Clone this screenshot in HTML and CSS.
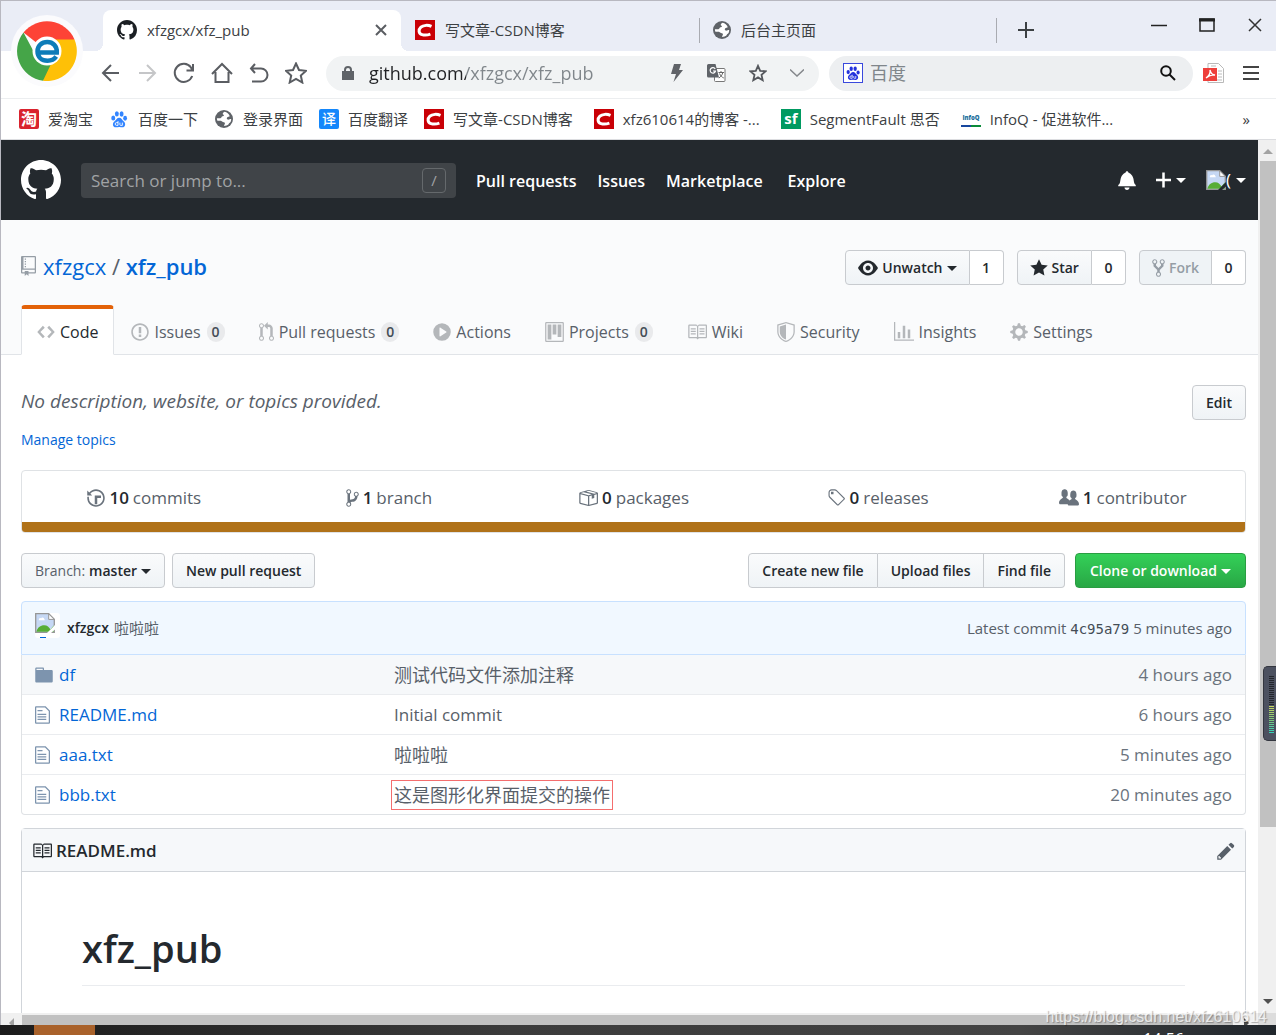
FILE: index.html
```html
<!DOCTYPE html>
<html lang="zh-CN">
<head>
<meta charset="utf-8">
<title>xfzgcx/xfz_pub</title>
<link rel="stylesheet" href="styles.css">
</head>
<body>
<svg class="sprite" aria-hidden="true">
  <symbol id="mark" viewBox="0 0 16 16"><path d="M8 0C3.58 0 0 3.58 0 8c0 3.54 2.29 6.53 5.47 7.59.4.07.55-.17.55-.38 0-.19-.01-.82-.01-1.49-2.01.37-2.53-.49-2.69-.94-.09-.23-.48-.94-.82-1.13-.28-.15-.68-.52-.01-.53.63-.01 1.08.58 1.23.82.72 1.21 1.87.87 2.33.66.07-.52.28-.87.51-1.07-1.78-.2-3.64-.89-3.64-3.95 0-.87.31-1.59.82-2.15-.08-.2-.36-1.02.08-2.12 0 0 .67-.21 2.2.82.64-.18 1.32-.27 2-.27.68 0 1.36.09 2 .27 1.53-1.04 2.2-.82 2.2-.82.44 1.1.16 1.92.08 2.12.51.56.82 1.27.82 2.15 0 3.07-1.87 3.75-3.65 3.95.29.25.54.73.54 1.48 0 1.07-.01 1.93-.01 2.2 0 .21.15.46.55.38A8.013 8.013 0 0016 8c0-4.42-3.58-8-8-8z"/></symbol>
  <symbol id="repo" viewBox="0 0 12 16"><path d="M4 9H3V8h1v1zm0-3H3v1h1V6zm0-2H3v1h1V4zm0-2H3v1h1V2zm8-1v12c0 .55-.45 1-1 1H6v2l-1.5-1.5L3 16v-2H1c-.55 0-1-.45-1-1V1c0-.55.45-1 1-1h10c.55 0 1 .45 1 1zm-1 10H1v2h2v-1h3v1h5v-2zm0-10H2v9h9V1z"/></symbol>
  <symbol id="code" viewBox="0 0 14 16"><path d="M9.5 3L8 4.5 11.5 8 8 11.5 9.5 13 14 8 9.5 3zm-5 0L0 8l4.5 5L6 11.5 2.5 8 6 4.5 4.5 3z"/></symbol>
  <symbol id="issue" viewBox="0 0 14 16"><path d="M7 2.3c3.14 0 5.7 2.56 5.7 5.7s-2.56 5.7-5.7 5.7A5.71 5.71 0 011.3 8c0-3.14 2.56-5.7 5.7-5.7zM7 1C3.14 1 0 4.14 0 8s3.14 7 7 7 7-3.14 7-7-3.14-7-7-7zm1 3H6v5h2V4zm0 6H6v2h2v-2z"/></symbol>
  <symbol id="pull" viewBox="0 0 12 16"><path d="M11 11.28V5c-.03-.78-.34-1.47-.94-2.06C9.46 2.35 8.78 2.03 8 2H7V0L4 3l3 3V4h1c.27.02.48.11.69.31.21.2.3.42.31.69v6.28A1.993 1.993 0 0010 15a1.993 1.993 0 001-3.72zm-1 2.92c-.66 0-1.2-.55-1.2-1.2 0-.65.55-1.2 1.2-1.2.65 0 1.2.55 1.2 1.2 0 .65-.55 1.2-1.2 1.2zM4 3c0-1.11-.89-2-2-2a1.993 1.993 0 00-1 3.72v6.56A1.993 1.993 0 002 15a1.993 1.993 0 001-3.72V4.72c.59-.34 1-.98 1-1.72zm-.8 10c0 .66-.55 1.2-1.2 1.2-.65 0-1.2-.55-1.2-1.2 0-.65.55-1.2 1.2-1.2.65 0 1.2.55 1.2 1.2zM2 4.2C1.34 4.2.8 3.65.8 3c0-.65.55-1.2 1.2-1.2.65 0 1.2.55 1.2 1.2 0 .65-.55 1.2-1.2 1.2z"/></symbol>
  <symbol id="play" viewBox="0 0 14 16"><path fill-rule="evenodd" d="M14 8A7 7 0 110 8a7 7 0 0114 0zm-8.223 3.482l4.599-3.066a.5.5 0 000-.832L5.777 4.518A.5.5 0 005 4.934v6.132a.5.5 0 00.777.416z"/></symbol>
  <symbol id="project" viewBox="0 0 15 16"><path fill-rule="evenodd" d="M10 12h3V2h-3v10zm-4-2h3V2H6v8zm-4 4h3V2H2v12zm-1 1h13V1H1v14zM14 0H1a1 1 0 00-1 1v14a1 1 0 001 1h13a1 1 0 001-1V1a1 1 0 00-1-1z"/></symbol>
  <symbol id="book" viewBox="0 0 16 16"><path fill-rule="evenodd" d="M3 5h4v1H3V5zm0 3h4V7H3v1zm0 2h4V9H3v1zm11-5h-4v1h4V5zm0 2h-4v1h4V7zm0 2h-4v1h4V9zm2-6v9c0 .55-.45 1-1 1H9.5l-1 1-1-1H2c-.55 0-1-.45-1-1V3c0-.55.45-1 1-1h5.5l1 1 1-1H15c.55 0 1 .45 1 1zm-8 .5L7.5 3H2v9h6V3.5zm7-.5H9.5l-.5.5V12h6V3z"/></symbol>
  <symbol id="shield" viewBox="0 0 14 16"><path fill-rule="evenodd" d="M0 2l7-2 7 2v6.02C14 12.69 8.69 16 7 16c-1.69 0-7-3.31-7-7.98V2zm1 .75L7 1l6 1.75v5.268C13 12.104 8.449 15 7 15c-1.449 0-6-2.896-6-6.982V2.75zm1 .75L7 2v12c-1.207 0-5-2.482-5-5.985V3.5z"/></symbol>
  <symbol id="graph" viewBox="0 0 16 16"><path d="M16 14v1H0V0h1v14h15zM5 13H3V8h2v5zm4 0H7V3h2v10zm4 0h-2V6h2v7z"/></symbol>
  <symbol id="gear" viewBox="0 0 14 16"><path fill-rule="evenodd" d="M14 8.77v-1.6l-1.94-.64-.45-1.09.88-1.84-1.13-1.13-1.81.91-1.09-.45-.69-1.92h-1.6l-.63 1.94-1.11.45-1.84-.88-1.13 1.13.91 1.81-.45 1.09L0 7.23v1.59l1.94.64.45 1.09-.88 1.84 1.13 1.13 1.81-.91 1.09.45.69 1.92h1.59l.63-1.94 1.11-.45 1.84.88 1.13-1.13-.92-1.81.47-1.09L14 8.75v.02zM7 11c-1.66 0-3-1.34-3-3s1.34-3 3-3 3 1.34 3 3-1.34 3-3 3z"/></symbol>
  <symbol id="eye" viewBox="0 0 16 16"><path fill-rule="evenodd" d="M8.06 2C3 2 0 8 0 8s3 6 8.06 6C13 14 16 8 16 8s-3-6-7.94-6zM8 12c-2.2 0-4-1.78-4-4 0-2.2 1.8-4 4-4 2.22 0 4 1.8 4 4 0 2.22-1.78 4-4 4zm2-4c0 1.11-.89 2-2 2-1.11 0-2-.89-2-2 0-1.11.89-2 2-2 1.11 0 2 .89 2 2z"/></symbol>
  <symbol id="star" viewBox="0 0 14 16"><path d="M14 6l-4.9-.64L7 1 4.9 5.36 0 6l3.6 3.26L2.67 14 7 11.67 11.33 14l-.93-4.74L14 6z"/></symbol>
  <symbol id="fork" viewBox="0 0 10 16"><path fill-rule="evenodd" d="M8 1a1.993 1.993 0 00-1 3.72V6L5 8 3 6V4.72A1.993 1.993 0 002 1a1.993 1.993 0 00-1 3.72V6.5l3 3v1.78A1.993 1.993 0 005 15a1.993 1.993 0 001-3.72V9.5l3-3V4.72A1.993 1.993 0 008 1zM2 4.2C1.34 4.2.8 3.65.8 3c0-.65.55-1.2 1.2-1.2.65 0 1.2.55 1.2 1.2 0 .65-.55 1.2-1.2 1.2zm3 10c-.66 0-1.2-.55-1.2-1.2 0-.65.55-1.2 1.2-1.2.65 0 1.2.55 1.2 1.2 0 .65-.55 1.2-1.2 1.2zm3-10c-.66 0-1.2-.55-1.2-1.2 0-.65.55-1.2 1.2-1.2.65 0 1.2.55 1.2 1.2 0 .65-.55 1.2-1.2 1.2z"/></symbol>
  <symbol id="history" viewBox="0 0 14 16"><path d="M8 13H6V6h5v2H8v5zM7 1C4.81 1 2.87 2.02 1.59 3.59L0 2v4h4L2.5 4.5C3.55 3.17 5.17 2.3 7 2.3c3.14 0 5.7 2.56 5.7 5.7s-2.56 5.7-5.7 5.7A5.71 5.71 0 011.3 8c0-.34.03-.67.09-1H.08C.03 7.33 0 7.66 0 8c0 3.86 3.14 7 7 7s7-3.14 7-7-3.14-7-7-7z"/></symbol>
  <symbol id="branch" viewBox="0 0 10 16"><path fill-rule="evenodd" d="M10 5c0-1.11-.89-2-2-2a1.993 1.993 0 00-1 3.72v.3c-.02.52-.23.98-.63 1.38-.4.4-.86.61-1.38.63-.83.02-1.48.16-2 .45V4.72a1.993 1.993 0 00-1-3.72C.88 1 0 1.89 0 3a2 2 0 001 1.72v6.56c-.59.35-1 .99-1 1.72 0 1.11.89 2 2 2 1.11 0 2-.89 2-2 0-.53-.2-1-.53-1.36.09-.06.48-.41.59-.47.25-.11.56-.17.94-.17 1.05-.05 1.95-.45 2.75-1.25S8.95 7.77 9 6.73h-.02C9.59 6.37 10 5.73 10 5zM2 1.8c.66 0 1.2.55 1.2 1.2 0 .65-.55 1.2-1.2 1.2C1.35 4.2.8 3.65.8 3c0-.65.55-1.2 1.2-1.2zm0 12.41c-.66 0-1.2-.55-1.2-1.2 0-.65.55-1.2 1.2-1.2.65 0 1.2.55 1.2 1.2 0 .65-.55 1.2-1.2 1.2zm6-8c-.66 0-1.2-.55-1.2-1.2 0-.65.55-1.2 1.2-1.2.65 0 1.2.55 1.2 1.2 0 .65-.55 1.2-1.2 1.2z"/></symbol>
  <symbol id="package" viewBox="0 0 16 16"><path fill-rule="evenodd" d="M1 4.27v7.47c0 .45.3.84.75.97l6.5 1.73c.16.05.34.05.5 0l6.5-1.73c.45-.13.75-.52.75-.97V4.27c0-.45-.3-.84-.75-.97l-6.5-1.74a1.4 1.4 0 00-.5 0L1.75 3.3c-.45.13-.75.52-.75.97zm7 9.09l-6-1.59V5l6 1.61v6.75zM2 4l2.5-.67L11 5.06l-2.5.67L2 4zm13 7.77l-6 1.59V6.61l2-.55V8.5l2-.53V5.53L15 5v6.77zm-2-7.24L6.5 2.8l2-.53L15 4l-2 .53z"/></symbol>
  <symbol id="tag" viewBox="0 0 14 16"><path fill-rule="evenodd" d="M7.73 1.73C7.26 1.26 6.62 1 5.96 1H3.5C2.13 1 1 2.13 1 3.5v2.47c0 .66.27 1.3.73 1.77l6.06 6.06c.39.39 1.02.39 1.41 0l4.59-4.59a.996.996 0 000-1.41L7.73 1.73zM2.38 7.09c-.31-.3-.47-.7-.47-1.13V3.5c0-.88.72-1.59 1.59-1.59h2.47c.42 0 .83.16 1.13.47l6.14 6.13-4.73 4.73-6.13-6.15zM3.01 3h2v2H3V3h.01z"/></symbol>
  <symbol id="people" viewBox="0 0 16 16"><path d="M16 12.999c0 .439-.45 1-1 1H7.995c-.539 0-.994-.447-.995-.999H1c-.54 0-1-.561-1-1 0-2.634 3-4 3-4s.229-.409 0-1c-.841-.621-1.058-.59-1-3 .058-2.419 1.367-3 2.5-3s2.442.58 2.5 3c.058 2.41-.159 2.379-1 3-.229.59 0 1 0 1s1.549.711 2.42 2.088C9.196 9.369 10 8.999 10 8.999s.229-.409 0-1c-.841-.62-1.058-.59-1-3 .058-2.419 1.367-3 2.5-3s2.437.581 2.495 3c.059 2.41-.158 2.38-1 3-.229.59 0 1 0 1s3.005 1.366 3.005 4z"/></symbol>
  <symbol id="file" viewBox="0 0 12 16"><path fill-rule="evenodd" d="M6 5H2V4h4v1zM2 8h7V7H2v1zm0 2h7V9H2v1zm0 2h7v-1H2v1zm10-7.5V14c0 .55-.45 1-1 1H1c-.55 0-1-.45-1-1V2c0-.55.45-1 1-1h7.5L12 4.5zM11 5L8 2H1v12h10V5z"/></symbol>
  <symbol id="folder" viewBox="0 0 14 16"><path fill-rule="evenodd" d="M13 4H7V3c0-.66-.31-1-1-1H1c-.55 0-1 .45-1 1v10c0 .55.45 1 1 1h12c.55 0 1-.45 1-1V5c0-.55-.45-1-1-1zM6 4H1V3h5v1z"/></symbol>
  <symbol id="pencil" viewBox="0 0 14 16"><path fill-rule="evenodd" d="M0 12v3h3l8-8-3-3-8 8zm3 2H1v-2h1v1h1v1zm10.3-9.3L12 6 9 3l1.3-1.3a.996.996 0 011.41 0l1.59 1.59c.39.39.39 1.02 0 1.41z"/></symbol>
  <symbol id="bell" viewBox="0 0 14 16"><path d="M14 12v1H0v-1l.73-.58c.77-.77.81-2.55 1.19-4.42C2.69 3.23 6 2 6 2c0-.55.45-1 1-1s1 .45 1 1c0 0 3.39 1.23 4.16 5 .38 1.88.42 3.66 1.19 4.42l.66.58H14zm-7 4c1.11 0 2-.89 2-2H5c0 1.11.89 2 2 2z"/></symbol>
  <symbol id="plus" viewBox="0 0 12 16"><path d="M12 9H7v5H5V9H0V7h5V2h2v5h5v2z"/></symbol>
  <symbol id="csdn" viewBox="0 0 20 20"><path fill="#c90006" d="M0 0h20v20H0z"/><path fill="none" stroke="#fff" stroke-width="3" d="M16.500 6.300C13 4.900 8.300 5 5.900 7.200 3.100 9.800 3.600 13.600 7 14.600c2.700.8 5.600.5 8.400-.5"/></symbol>
  <symbol id="globe" viewBox="0 0 18 18"><circle cx="9" cy="9" r="9" fill="#5f6368"/><path fill="#fff" d="M9.500 1.800c-1.800 1-2.300 2.300-1 3 .9.500.3 1.500-.8 1.500-1.400 0-1 1.800-2.300 2H1.900c0 .9.100 1.700.5 2.500 2 .2 3.300-.3 4.700.6 1.100.8 2.600.5 2.800 1.700.2 1.100-.8 1.700-.8 2.900 1.700 0 3.300-.6 4.500-1.700.3-1.300 1.300-1.600 2-2.300.4-.9.600-1.900.6-2.900-1.400-.2-2 .9-3.300.5-1.200-.3-1.400-1.400-.6-2.300.7-.8 1.700-.4 2.500-1.100A7.300 7.300 0 009.500 1.800z"/></symbol>
  <symbol id="paw" viewBox="0 0 20 20"><ellipse cx="3.600" cy="8.800" rx="2.200" ry="2.800"/><ellipse cx="7.600" cy="4.300" rx="2.200" ry="3"/><ellipse cx="12.900" cy="4.400" rx="2.200" ry="3"/><ellipse cx="16.800" cy="9.200" rx="2.100" ry="2.700"/><path d="M10.200 8.600c2.500 0 3 2.400 5.200 4.200 2.500 2.100 1.700 6.500-1.700 6.500-1.500 0-2.200-.3-3.500-.3s-2.300.3-3.700.3c-3.500 0-4.300-4.200-1.700-6.500 2.300-1.900 2.900-4.200 5.400-4.200z"/><path fill="none" stroke="#fff" d="M8.900 12.300v4.800H7.300a1.500 1.500 0 010-3.100h1.600M11 14v2.200c0 .7.300.9 1 .9h1.700V14"/></symbol>
  <symbol id="broken" viewBox="0 0 20 20"><path fill="#c6d8f4" stroke="#969696" stroke-width="1.300" d="M.7.700h13l5.600 5.600v13H.7z"/><path fill="#fff" d="M4 7.200c-.7-1.600 1-2.800 2-1.800.8-1.800 3.500-1 3.200.9.800 0 .9.900.4.900z"/><path fill="#57ad35" d="M1.400 18.700c1-4 4-6.400 7.800-6.400 3 0 5 2 6.300 4.300l3.200-4v6.100z"/><path fill="#fff" stroke="#969696" d="M13.700.9v5.500h5.500z"/><path fill="currentColor" d="M12 20l8-8v4.500L16 20z"/></symbol>
</svg>

<div class="window">
  <header class="chrome">
    <div class="tabstrip">
      <div class="tab active"><svg width="20" height="20"><use href="#mark"/></svg><span>xfzgcx/xfz_pub</span>
        <button class="bare tab-close" aria-label="关闭标签页"><svg width="12" height="12" viewBox="0 0 12 12" fill="none" stroke="#5a5d62" stroke-width="2"><path d="M1 1l10 10M11 1L1 11"/></svg></button></div>
      <div class="tab"><svg width="20" height="20"><use href="#csdn"/></svg><span>写文章-CSDN博客</span></div>
      <div class="tab ruled"><svg width="18" height="18"><use href="#globe"/></svg><span>后台主页面</span></div>
      <button class="bare new-tab" aria-label="新标签页"><svg width="16" height="16" viewBox="0 0 16 16" stroke="#3c4043" stroke-width="2"><path d="M8 0v16M0 8h16"/></svg></button>
      <div class="controls">
        <button class="bare" aria-label="最小化"><svg width="16" height="16" viewBox="0 0 16 16" stroke="#222" stroke-width="1.500"><path d="M0 8.500h16"/></svg></button>
        <button class="bare" aria-label="最大化"><svg width="16" height="16" viewBox="0 0 16 16" fill="none" stroke="#222"><path stroke-width="1.500" d="M1 2h14v12H1z"/><path stroke-width="3" d="M0 3h16"/></svg></button>
        <button class="bare" aria-label="关闭"><svg width="16" height="16" viewBox="0 0 16 16" stroke="#333" stroke-width="1.500"><path d="M2 2l12 12M14 2L2 14"/></svg></button>
      </div>
    </div>
    <svg class="brand" width="74" height="74" viewBox="0 0 74 74" aria-label="浏览器标志">
      <circle cx="37" cy="37" r="36" fill="#fbfbfd"/>
      <path fill="#fd4336" d="M37 37L13.500 18.500A30 30 0 0164.500 25.500z"/>
      <path fill="#fec007" d="M37 37V25.500h27.500A30 30 0 0133 66.800z"/>
      <path fill="#45a548" d="M37 37l-4 29.800A30 30 0 0113.500 18.500L25 40l16 10-8 16.800z"/>
      <circle cx="37" cy="37" r="14.500" fill="#fff"/>
      <path fill="none" stroke="#0d7cb8" stroke-width="4.500" d="M27 38.500h19.800c.5-6.500-4-10.500-9.500-10.500-5.700 0-9.800 4-9.800 9.300 0 5.500 4 9.400 10 9.400 4 0 6.800-1.400 8.700-4.200"/>
    </svg>
    <div class="toolbar">
      <div class="nav-icons">
        <button class="bare" aria-label="后退"><svg width="20" height="20" viewBox="0 0 20 20"><path d="M18 10H2M10 2l-8 8 8 8"/></svg></button>
        <button class="bare dim" aria-label="前进"><svg width="20" height="20" viewBox="0 0 20 20"><path d="M2 10h16M10 2l8 8-8 8"/></svg></button>
        <button class="bare" aria-label="刷新"><svg width="22" height="22" viewBox="0 0 22 22"><path d="M19.200 14A9 9 0 1118 5.500L19 7.500M20 2v6.500h-6.500"/></svg></button>
        <button class="bare" aria-label="主页"><svg width="22" height="22" viewBox="0 0 22 22"><path d="M1 12L11 2l10 10M4.500 10v10h13V10"/></svg></button>
        <button class="bare" aria-label="撤销"><svg width="20" height="20" viewBox="0 0 20 20"><path d="M6 1L2 5.500 6 10M2 5.500h10a6.500 6.500 0 010 13H3"/></svg></button>
        <button class="bare" aria-label="收藏"><svg width="22" height="22" viewBox="0 0 22 22"><path d="M11 1.500l3 6.500 7 .8-5.200 4.700 1.500 7L11 17l-6.300 3.500 1.500-7L1 8.800 8 8z"/></svg></button>
      </div>
      <div class="pill address">
        <svg width="12" height="14" viewBox="0 0 12 14"><path fill="#5f6368" d="M0 5h12v9H0z"/><path fill="none" stroke="#5f6368" stroke-width="2" d="M3 6V4a3 3 0 016 0v2"/></svg>
        <input class="url" aria-label="地址" value="github.com/xfzgcx/xfz_pub">
        <button class="bare" aria-label="极速模式"><svg width="14" height="18" viewBox="0 0 14 18"><path fill="#606368" d="M4 0h7L9 6h4L3.500 18 6 10H1z"/></svg></button>
        <button class="bare" aria-label="翻译"><svg width="19" height="19" viewBox="0 0 19 19"><rect x="7.500" y="4.500" width="10.500" height="13" rx="1" fill="#fff" stroke="#777"/><path fill="#5f6368" d="M1.500 0h7l3.500 13.500H1.500A1.500 1.500 0 010 12V1.500A1.500 1.500 0 011.500 0z"/><path fill="none" stroke="#fff" stroke-width="1.200" d="M8.200 5A2.700 2.700 0 108.500 7H6"/><path fill="none" stroke="#666" d="M11.500 8.500h5.500M14 7v1.500M15.800 8.500c-.5 2.500-2 4.500-4 5.500M12.500 9.500c1 2.200 2.500 3.800 4.300 4.500"/></svg></button>
        <button class="bare" aria-label="加入收藏"><svg width="18" height="18" viewBox="0 0 18 18" fill="none" stroke="#55585d" stroke-width="1.800"><path d="M9 1.800l2.200 5 5.300.5-4 3.600 1.200 5.300L9 13.400l-4.700 2.800 1.200-5.300-4-3.600 5.300-.5z"/></svg></button>
        <button class="bare" aria-label="展开"><svg width="14" height="8" viewBox="0 0 14 8" fill="none" stroke="#85888c" stroke-width="1.500"><path d="M0 .5l7 6.500 7-6.500"/></svg></button>
      </div>
      <div class="pill search">
        <svg class="baidu" width="20" height="20" viewBox="0 0 20 20"><rect x=".5" y=".5" width="19" height="19" fill="#fff" stroke="#3a49dd"/><svg x="2.500" y="2" width="15" height="16"><use href="#paw"/></svg></svg>
        <input aria-label="搜索" placeholder="百度">
        <button class="bare" aria-label="搜索"><svg width="16" height="16" viewBox="0 0 16 16" fill="none" stroke="#111" stroke-width="2"><circle cx="6" cy="6" r="4.800"/><path d="M9.500 9.500l5.500 5.500"/></svg></button>
      </div>
      <button class="bare" aria-label="PDF"><svg width="21" height="21" viewBox="0 0 21 21"><path fill="#fff" stroke="#b9b9b9" d="M5 .5h10.500l5 5v14H5z"/><path stroke="#bbb" d="M8 3h5M15 8h4M15 11h4M15 14h4M9 17h10"/><path fill="#ee3f3b" d="M0 5h14v13H0z"/><path fill="none" stroke="#fff" stroke-width="1.300" d="M3 15c3-2 4.500-5 4-8 1 4 2.500 5 5 5-3-.6-6 .6-9 3z"/></svg></button>
      <button class="bare menu" aria-label="菜单"><svg width="16" height="16" viewBox="0 0 16 16" stroke="#444" stroke-width="2"><path d="M0 2h16M0 8h16M0 14h16"/></svg></button>
    </div>
    <nav class="bookmarks">
      <a href="#"><svg width="20" height="20" viewBox="0 0 20 20"><rect width="20" height="20" rx="2" fill="#d9232e"/><text x="10" y="16" text-anchor="middle" font-size="16" font-weight="700" fill="#fff">淘</text></svg>爱淘宝</a>
      <a href="#"><svg width="20" height="18" fill="#3385ff"><use href="#paw"/></svg>百度一下</a>
      <a href="#"><svg width="20" height="18"><use href="#globe"/></svg>登录界面</a>
      <a href="#"><svg width="20" height="20" viewBox="0 0 20 20"><rect width="20" height="20" rx="2" fill="#1487fb"/><text x="10" y="15" text-anchor="middle" font-size="14" font-weight="500" fill="#fff">译</text></svg>百度翻译</a>
      <a class="site" href="#"><svg width="20" height="20"><use href="#csdn"/></svg>写文章-CSDN博客</a>
      <a class="site" href="#"><svg width="20" height="20"><use href="#csdn"/></svg>xfz610614的博客 -...</a>
      <a class="site" href="#"><svg width="20" height="20" viewBox="0 0 20 20"><path fill="#009a61" d="M0 0h20v20H0z"/><text x="10" y="15" text-anchor="middle" font-size="15" font-weight="700" fill="#fff">sf</text></svg>SegmentFault 思否</a>
      <a class="site" href="#"><svg width="20" height="20" viewBox="0 0 20 20"><text x="10" y="11" text-anchor="middle" font-size="6" font-weight="800" fill="#1b6f9c">InfoQ</text><path fill="#17479e" d="M0 16h10v2H0z"/><path fill="#0a8a3a" d="M10 16h10v2H10z"/></svg>InfoQ - 促进软件...</a>
      <button class="bare more" aria-label="更多书签">»</button>
    </nav>
  </header>

  <div class="viewport">
    <main class="page">
      <header class="gh-header">
        <a href="#" aria-label="GitHub"><svg width="40" height="40" fill="#fff"><use href="#mark"/></svg></a>
        <div class="gh-search"><input aria-label="Search" placeholder="Search or jump to..."><kbd>/</kbd></div>
        <nav class="gh-nav"><a href="#">Pull requests</a><a href="#">Issues</a><a href="#">Marketplace</a><a class="explore" href="#">Explore</a></nav>
        <div class="gh-user">
          <button class="bare" aria-label="Notifications"><svg width="18" height="20"><use href="#bell"/></svg></button>
          <button class="bare" aria-label="Create new"><svg width="15" height="20"><use href="#plus"/></svg><i class="caret"></i></button>
          <button class="bare" aria-label="View profile"><svg class="on-dark" width="20" height="20"><use href="#broken"/></svg><span>(</span><i class="caret"></i></button>
        </div>
      </header>

      <section class="repo-head">
        <div class="repo-title">
          <svg width="15" height="20"><use href="#repo"/></svg>
          <h1><a href="#">xfzgcx</a> <span>/</span> <a class="strong" href="#">xfz_pub</a></h1>
          <div class="actions">
            <div class="group"><button class="btn"><svg width="20" height="20"><use href="#eye"/></svg>Unwatch<i class="caret"></i></button><a class="count" href="#">1</a></div>
            <div class="group"><button class="btn"><svg width="18" height="20"><use href="#star"/></svg>Star</button><a class="count" href="#">0</a></div>
            <div class="group"><button class="btn" disabled><svg width="13" height="20"><use href="#fork"/></svg>Fork</button><a class="count" href="#">0</a></div>
          </div>
        </div>
        <nav class="repo-nav">
          <a class="selected" href="#"><svg width="18" height="20"><use href="#code"/></svg>Code</a>
          <a href="#"><svg width="18" height="20"><use href="#issue"/></svg>Issues<b>0</b></a>
          <a href="#"><svg width="15" height="20"><use href="#pull"/></svg>Pull requests<b>0</b></a>
          <a href="#"><svg width="18" height="20"><use href="#play"/></svg>Actions</a>
          <a href="#"><svg width="19" height="20"><use href="#project"/></svg>Projects<b>0</b></a>
          <a href="#"><svg width="20" height="20"><use href="#book"/></svg>Wiki</a>
          <a href="#"><svg width="18" height="20"><use href="#shield"/></svg>Security</a>
          <a href="#"><svg width="20" height="20"><use href="#graph"/></svg>Insights</a>
          <a href="#"><svg width="18" height="20"><use href="#gear"/></svg>Settings</a>
        </nav>
      </section>

      <div class="content">
        <div class="about"><em>No description, website, or topics provided.</em><button class="btn">Edit</button></div>
        <a class="topics" href="#">Manage topics</a>

        <div class="summary">
          <ul>
            <li><a href="#"><svg width="18" height="20"><use href="#history"/></svg><b>10</b> commits</a></li>
            <li><a href="#"><svg width="13" height="20"><use href="#branch"/></svg><b>1</b> branch</a></li>
            <li><a href="#"><svg width="20" height="20"><use href="#package"/></svg><b>0</b> packages</a></li>
            <li><a href="#"><svg width="18" height="20"><use href="#tag"/></svg><b>0</b> releases</a></li>
            <li><a href="#"><svg width="20" height="20"><use href="#people"/></svg><b>1</b> contributor</a></li>
          </ul>
          <div class="language"></div>
        </div>

        <div class="file-nav">
          <button class="btn"><span class="soft">Branch:</span> master<i class="caret"></i></button>
          <button class="btn">New pull request</button>
          <div class="group end"><button class="btn">Create new file</button><button class="btn">Upload files</button><button class="btn">Find file</button></div>
          <button class="btn primary">Clone or download<i class="caret"></i></button>
        </div>

        <div class="commit">
          <svg class="avatar" width="25" height="25" viewBox="0 0 25 25"><rect width="25" height="25" rx="3" fill="#fff"/><use class="on-light" href="#broken" width="20" height="20"/><path fill="#0366d6" d="M5 24h6v1H5z"/></svg>
          <a class="author" href="#">xfzgcx</a><a class="message" href="#">啦啦啦</a>
          <span class="latest">Latest commit <a href="#">4c95a79</a> 5 minutes ago</span>
        </div>
        <table class="files">
          <colgroup><col class="col-name"><col><col class="col-age"></colgroup>
          <tbody>
            <tr class="hover"><td><div class="name"><svg width="18" height="20"><use href="#folder"/></svg><a href="#">df</a></div></td><td><span lang="zh">测试代码文件添加注释</span></td><td>4 hours ago</td></tr>
            <tr><td><div class="name"><svg width="18" height="20" viewBox="0 0 18 20"><use href="#file" width="15" height="20"/></svg><a href="#">README.md</a></div></td><td>Initial commit</td><td>6 hours ago</td></tr>
            <tr><td><div class="name"><svg width="18" height="20" viewBox="0 0 18 20"><use href="#file" width="15" height="20"/></svg><a href="#">aaa.txt</a></div></td><td><span lang="zh">啦啦啦</span></td><td>5 minutes ago</td></tr>
            <tr><td><div class="name"><svg width="18" height="20" viewBox="0 0 18 20"><use href="#file" width="15" height="20"/></svg><a href="#">bbb.txt</a></div></td><td><span lang="zh" class="marked">这是图形化界面提交的操作</span></td><td>20 minutes ago</td></tr>
          </tbody>
        </table>

        <article class="readme">
          <header><svg width="20" height="20"><use href="#book"/></svg><h2>README.md</h2><button class="bare" aria-label="Edit this file"><svg width="18" height="20"><use href="#pencil"/></svg></button></header>
          <div class="readme-body"><h1>xfz_pub</h1></div>
        </article>
      </div>
    </main>
    <div class="vbar"><i class="up"></i><div class="thumb"></div><i class="down"></i></div>
    <div class="hbar"><i class="left"></i><div class="thumb"></div><i class="right"></i></div>
    <div class="corner"></div>
  </div>
  <footer class="taskbar"><span class="running"></span><time>14:56</time></footer>
  <div class="meter"><span></span></div>
  <div class="watermark">https://blog.csdn.net/xfz610614</div>
</div>
</body>
</html>
```
FILE: styles.css
```css
* { box-sizing: border-box; }
body {
  margin: 0;
  overflow: hidden;
  color: #24292e;
  font: 17px/26px "Open Sans", "Noto Sans CJK SC", sans-serif;
}
a { color: #0366d6; text-decoration: none; }
svg { flex: none; display: block; fill: currentColor; }
svg[fill="none"] { fill: none; }
svg[fill="#fff"] { fill: #fff; }
svg[fill="#3385ff"] { fill: #3385ff; }
.sprite { position: absolute; width: 0; height: 0; }
button, input { font: inherit; color: inherit; }
input { min-width: 0; padding: 0; border: 0; outline: 0; background: none; }
.bare { display: flex; align-items: center; justify-content: center; padding: 0; border: 0; background: none; }
.caret { width: 0; margin-top: 1px; border: 5px solid transparent; border-top-color: currentColor; border-bottom: 0; }

.window {
  position: relative;
  display: flex;
  flex-direction: column;
  height: 100vh;
  border-top: 1px solid #b8b8c0;
  border-left: 1px solid #b8b8c0;
}

/* browser chrome */
.chrome { position: relative; flex: none; background: #fff; color: #3c4043; font-size: 15px; line-height: 20px; }
.tabstrip { display: flex; align-items: flex-end; height: 50px; padding-left: 102px; background: #eaedf6; }
.tab { position: relative; display: flex; align-items: center; gap: 10px; flex: 0 1 298px; height: 41px; padding: 0 14px 2px; }
.tab.active { background: #fff; border-radius: 8px 8px 0 0; }
.tab.active > svg { color: #1b1f23; }
.tab.active::before, .tab.active::after { content: ""; position: absolute; bottom: 0; width: 8px; height: 8px; }
.tab.active::before { left: -8px; background: radial-gradient(circle at 0 0, #eaedf6 8px, #fff 8px); }
.tab.active::after { right: -8px; background: radial-gradient(circle at 100% 0, #eaedf6 8px, #fff 8px); }
.tab-close { margin-left: auto; }
.tab.ruled::before, .tab.ruled::after { content: ""; position: absolute; top: 8px; width: 1px; height: 25px; background: #a9abb1; }
.tab.ruled::before { left: 0; }
.tab.ruled::after { right: 0; }
.new-tab { height: 41px; margin-left: 21px; padding-bottom: 2px; }
.controls { display: flex; align-items: center; gap: 32px; height: 50px; margin-left: auto; padding: 0 13px 2px 0; }
.brand { position: absolute; left: 9px; top: 13px; z-index: 1; }
.toolbar { display: flex; align-items: center; height: 48px; padding: 0 17px 3px 100px; gap: 10px; border-bottom: 1px solid #eceef0; }
.nav-icons { display: flex; align-items: center; gap: 16px; margin-right: 9px; }
.nav-icons svg { fill: none; stroke: #5a5d62; stroke-width: 2; }
.nav-icons .dim svg { stroke: #c5c6c8; }
.menu { margin-left: 9px; }
.pill { display: flex; align-items: center; height: 35px; border-radius: 18px; background: #f1f3f4; }
.address { flex: 462; gap: 23px; padding: 0 15px 0 16px; }
.url {
  flex: 1;
  height: 30px;
  margin-left: -8px;
  font-size: 18px;
  color: transparent;
  background: linear-gradient(90deg, #202124 97px, #80868b 97px);
  -webkit-background-clip: text;
  background-clip: text;
}
.search { flex: 333; gap: 7px; padding: 0 17px 0 14px; background: #edeff1; }
.search input { flex: 1; font-size: 18px; }
.search input::placeholder { color: #80868b; }
.baidu { color: #2433dc; }
.bookmarks { display: flex; align-items: center; gap: 16px; height: 41px; padding: 0 26px 0 18px; border-bottom: 1px solid #dcdde0; white-space: nowrap; }
.bookmarks a { display: flex; align-items: center; gap: 9px; color: #3c4043; }
.bookmarks .site { padding-right: 5px; }
.more { margin-left: auto; }

/* page viewport with scrollbars */
.viewport { display: grid; grid-template: minmax(0, 1fr) 12px / minmax(0, 1fr) 18px; flex: 1; min-height: 0; }
.page { overflow: hidden; background: #fff; }
.vbar, .hbar { display: flex; background: #f0f0f0; }
.vbar { flex-direction: column; align-items: center; justify-content: space-between; padding: 9px 0 9px 2px; }
.vbar .thumb { width: 100%; height: 666px; flex: 0 1 auto; margin: 7px 0 auto; background: #c1c1c1; }
.hbar { align-items: flex-start; padding-top: 2px; }
.hbar .thumb { flex: 1; height: 10px; margin: 0 11px 0 8px; background: #c1c1c1; }
.vbar i, .hbar i { flex: none; border: 5px solid transparent; }
.vbar .up { border-top: 0; border-bottom-color: #a3a3a3; }
.vbar .down { border-bottom: 0; border-top-color: #505050; }
.hbar i { margin-top: 3px; }
.hbar .left { margin-left: 3px; border-right-color: #a3a3a3; }
.hbar .right { margin-right: 4px; border-left-color: #505050; }
.corner { background: #dcdcdc; }

/* GitHub header */
.gh-header { display: flex; align-items: center; gap: 20px; height: 80px; padding: 0 12px 0 20px; background: #24292e; color: #fff; }
.gh-search { display: flex; align-items: center; width: 375px; height: 35px; padding: 0 10px; border-radius: 4px; background: #404448; }
.gh-search input { flex: 1; padding-top: 2px; }
.gh-search input::placeholder { color: #a0a3a5; }
.gh-search kbd { width: 24px; height: 25px; border: 1px solid #65696c; border-radius: 4px; color: #a0a3a5; font: 15px/22px "Open Sans", sans-serif; text-align: center; }
.gh-nav { display: flex; gap: 21px; padding-top: 1px; }
.gh-nav a { color: #fff; font-size: 16px; font-weight: 600; }
.gh-nav .explore { margin-left: 4px; }
.gh-user { display: flex; align-items: center; gap: 20px; margin-left: auto; }
.gh-user .bare { color: #fff; }
.gh-user .caret { margin-left: 5px; }
.gh-user .on-dark { color: #24292e; }
.on-light { color: #fff; }

/* repository head */
.repo-head { padding: 30px 12px 0 20px; background: #fafbfc; border-bottom: 1px solid #e1e4e8; }
.repo-title { display: flex; align-items: center; gap: 7px; height: 35px; }
.repo-title > svg { margin-bottom: 4px; color: #959da5; }
.repo-title h1 { margin: 0; padding-bottom: 2px; font-size: 22px; line-height: 33px; font-weight: 400; }
.repo-title .strong { font-weight: 600; }
.repo-title h1 span { color: #586069; }
.actions { display: flex; gap: 13px; margin-left: auto; }
.group { display: flex; }
.btn {
  display: flex;
  align-items: center;
  justify-content: center;
  gap: 4px;
  height: 35px;
  padding: 0 12px;
  border: 1px solid #c8cbcf;
  border-radius: 4px;
  background: linear-gradient(#fafbfc, #eff3f6);
  color: #24292e;
  font-size: 14px;
  font-weight: 600;
  white-space: nowrap;
}
.btn:disabled { background: #eff3f6; color: #959da5; }
.group > * + * { border-left-width: 0; border-top-left-radius: 0; border-bottom-left-radius: 0; }
.group > :not(:last-child) { border-top-right-radius: 0; border-bottom-right-radius: 0; }
.count { min-width: 34px; padding: 0 12px; border: 1px solid #c8cbcf; border-left: 0; border-radius: 0 4px 4px 0; background: #fff; color: #24292e; font-size: 14px; line-height: 33px; font-weight: 600; text-align: center; }
.repo-nav { display: flex; margin: 20px 0 -1px; }
.repo-nav a { display: flex; align-items: center; gap: 5px; height: 50px; padding: 4px 16px 0; border: 1px solid transparent; border-top: 0; color: #586069; font-size: 16px; }
.repo-nav svg { color: #b4b7ba; }
.repo-nav .selected { padding: 0 15px; border: 1px solid #e1e4e8; border-top: 4px solid #e36209; border-bottom-color: #fff; border-radius: 4px 4px 0 0; background: #fff; color: #24292e; }
.repo-nav b { min-width: 18px; margin-left: 1px; border-radius: 10px; background: #e9eaec; color: #444d56; font-size: 14px; line-height: 20px; font-weight: 600; text-align: center; }

/* content */
.content { padding: 30px 12px 0 20px; }
.about { display: flex; align-items: center; justify-content: space-between; height: 35px; }
.about em { padding-bottom: 4px; color: #586069; font-size: 19px; }
.about .btn { padding: 0 13px; }
.topics { display: block; margin-top: 7px; font-size: 14px; line-height: 26px; }
.summary { margin-top: 17px; border: 1px solid #dfe2e5; border-radius: 4px; overflow: hidden; }
.summary ul { display: grid; grid-template-columns: repeat(5, 1fr); margin: 0; padding: 0; list-style: none; }
.summary a { display: flex; align-items: center; justify-content: center; gap: 4px; height: 51px; padding-top: 3px; color: #586069; }
.summary b { color: #24292e; font-weight: 600; }
.summary svg { color: #6a737d; }
.language { height: 10px; background: #b07219; }
.file-nav { display: flex; margin: 20px 0 13px; gap: 7px; }
.file-nav .btn { padding: 0 13px; }
.file-nav .primary { margin-left: 3px; padding: 0 14px; border-color: #2a9d42; background: linear-gradient(#34d058, #28a745); color: #fff; }
.soft { color: #586069; font-weight: 400; }
.end { margin-left: auto; }
.commit { display: flex; align-items: center; height: 54px; padding: 0 13px; border: 1px solid #c8e1ff; border-radius: 4px 4px 0 0; background: #f1f8ff; font-size: 14px; }
.commit .avatar { margin: -6px 7px 0 0; }
.commit .author { margin-right: 5px; color: #24292e; font-weight: 600; }
.commit .message { color: #586069; font-size: 15px; }
.latest { margin-left: auto; color: #586069; font-size: 15px; }
.latest a { color: #444d56; font: 14px "DejaVu Sans Mono", monospace; }
.files { width: 100%; border: 1px solid #dfe2e5; border-top: 0; border-collapse: separate; border-spacing: 0; border-radius: 0 0 4px 4px; table-layout: fixed; }
.col-name { width: 372px; }
.col-age { width: 170px; }
.files td { height: 40px; padding: 1px 0 0; border-top: 1px solid #eaecef; color: #586069; }
.files tr:first-child td { height: 39px; border-top: 0; }
.files td:last-child { padding-right: 13px; color: #6a737d; text-align: right; }
.name { display: flex; align-items: center; gap: 6px; padding-left: 13px; }
.name svg { color: #7d94ae; }
.files [lang="zh"] { font-size: 18px; }
.hover td { background: #f6f8fa; }
.marked { outline: 1px solid #f46e6e; outline-offset: 2px; }
.readme { margin-top: 13px; border: 1px solid #d1d5da; border-radius: 4px 4px 0 0; }
.readme header { display: flex; align-items: center; gap: 4px; height: 43px; padding: 1px 10px 0; border-bottom: 1px solid #d1d5da; background: #f6f8fa; }
.readme h2 { margin: 0; font-size: 17px; line-height: 26px; font-weight: 600; }
.readme header .bare { margin-left: auto; color: #586069; }
.readme-body { padding: 50px 60px; }
.readme-body h1 { margin: 0; padding-bottom: 11px; border-bottom: 1px solid #eaecef; font-size: 38px; line-height: 52px; font-weight: 600; }

/* desktop */
.taskbar { display: flex; flex: none; height: 10px; margin-left: -1px; padding: 0 92px 0 34px; overflow: hidden; background: linear-gradient(90deg, #1c1c1c, #3b3b3b 40%, #444 80%, #20262c); color: #fff; }
.running { width: 61px; background: #a9622b; }
.taskbar time { margin-left: auto; padding-top: 4px; font: 16px/20px "Open Sans", sans-serif; }
.meter { position: absolute; right: 0; top: 665px; width: 13px; height: 75px; padding: 9px 2px 7px 5px; border: 1px solid #33363f; border-right: 0; border-radius: 5px 0 0 5px; background: #4c5160; }
.meter span { display: block; height: 58px; background: repeating-linear-gradient(transparent 0 1px, #4c5160 1px 2px), linear-gradient(#23262c 30px, #c8d860 30px, #7cc77a 44px, #2fd2c0); }
.watermark { position: absolute; right: 9px; bottom: 8px; color: rgba(255, 255, 255, .75); font: 16px/20px "Liberation Sans", sans-serif; text-shadow: 1px 1px 1px rgba(0, 0, 0, .3); }
```
